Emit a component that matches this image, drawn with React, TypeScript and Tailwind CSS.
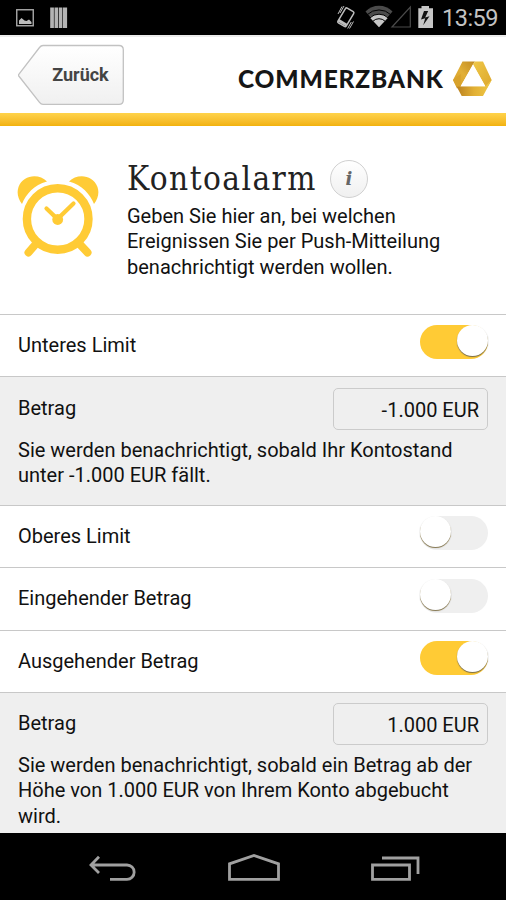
import { useState } from 'react'
import clsx from 'clsx'

type Alarm = {
  label: string
  height: string
  on: boolean
  amount?: string
  info?: string[]
  panelHeight?: string
}

const initialAlarms: Alarm[] = [
  {
    label: 'Unteres Limit',
    height: 'h-[62px]',
    on: true,
    amount: '-1.000 EUR',
    info: ['Sie werden benachrichtigt, sobald Ihr Kontostand', 'unter -1.000 EUR fällt.'],
    panelHeight: 'h-[128px] pt-[11px]',
  },
  { label: 'Oberes Limit', height: 'h-[62px]', on: false },
  { label: 'Eingehender Betrag', height: 'h-[63px]', on: false },
  {
    label: 'Ausgehender Betrag',
    height: 'h-[62px]',
    on: true,
    amount: '1.000 EUR',
    info: [
      'Sie werden benachrichtigt, sobald ein Betrag ab der',
      'Höhe von 1.000 EUR von Ihrem Konto abgebucht',
      'wird.',
    ],
    panelHeight: 'h-[142px] pt-[10px]',
  },
]

function StatusBar() {
  return (
    <div className="flex h-[35px] shrink-0 items-center justify-between bg-black">
      <svg width="80" height="35" viewBox="0 0 80 35">
        <rect x="16.75" y="9.75" width="16.5" height="16" fill="none" stroke="#a8a8a8" strokeWidth="1.4" />
        <path d="M19 24v-3.500l2.500-2.500 3 2.500 2 .5 2.500-1.500 2.500 2.500V24z" fill="#bdbdbd" />
        <path d="M50.200 7.500h3.700V28h-3.700zM54.500 7.500H58V28h-3.500zM58.700 7.500h3.700V28h-3.700zM63 7.500h4.100V28H63z" fill="#b4b4b4" />
      </svg>
      <div className="flex items-center">
        <svg width="110" height="35" viewBox="328 0 110 35">
          <g fill="none" stroke="#bdbdbd">
            <rect x="-4.800" y="-8.600" width="9.600" height="17.200" rx="1.300" strokeWidth="1.500" transform="translate(345.800 17.300) rotate(31)" />
            <path d="M-4.800 6.300h9.600" strokeWidth="3" transform="translate(345.800 17.300) rotate(31)" />
            <path d="M338 14l4-7.500M340 13l4-7M353.500 21.500l-4 7M351.300 22l-3.600 6.500" strokeWidth="1" />
          </g>
          <path d="M365.500 11.500a19 19 0 0 1 27 0L379 27z" fill="#4b4b4b" />
          <path d="M367.200 14.700a17 17 0 0 1 23.600 0" fill="none" stroke="#000" strokeWidth="1" />
          <path d="M370 17.800a13 13 0 0 1 18 0L379 27.300z" fill="#c6c6c6" />
          <path d="M370 17.800a13 13 0 0 1 18 0M373 21.200a8.500 8.500 0 0 1 12 0" fill="none" stroke="#000" strokeWidth="1" />
          <path d="M392 27L410.300 7v20z" fill="none" stroke="#4b4b4b" strokeWidth="1.200" />
          <path d="M418.300 8.300h3.200V6h7.500v2.300h4V28h-14.700z" fill="#c6c6c6" />
          <path d="M424 11l-3 8.500 4.200-1.200-2 7 6.300-9-4.300 1.200 3-6.500z" fill="#111" />
        </svg>
        <span className="w-[68px] pt-[3px] pl-[4px] font-[Roboto] text-[23.500px] leading-none tracking-[-0.500px] text-[#c3c3c3]">13:59</span>
      </div>
    </div>
  )
}

function Logo() {
  return (
    <div className="mt-[9px] flex items-center">
      <span className="w-[215px] font-[Lato] text-[24.500px] leading-none font-black tracking-[0.850px] text-[#161616]">COMMERZBANK</span>
      <svg width="40" height="36" viewBox="0 0 40 36" className="mt-[-2px]">
        <defs>
          <linearGradient id="left" x1="0" y1="1" x2="1" y2="0">
            <stop offset="0" stopColor="#d39b27" />
            <stop offset=".5" stopColor="#e2b037" />
            <stop offset="1" stopColor="#c08a22" />
          </linearGradient>
          <linearGradient id="right" x1="0" y1="0" x2="1" y2="1">
            <stop offset="0" stopColor="#efc848" />
            <stop offset="1" stopColor="#dca62c" />
          </linearGradient>
          <linearGradient id="bottom">
            <stop offset="0" stopColor="#b98020" />
            <stop offset=".5" stopColor="#e2b034" />
            <stop offset="1" stopColor="#f0c947" />
          </linearGradient>
        </defs>
        <path d="M9.500.5H22l-2 3L7.700 25.300 4 27.500 0 19z" fill="url(#left)" />
        <path d="M22 .5h8L38.700 19l-5 8.500-1.400-2.200L20 3.500z" fill="url(#right)" />
        <path d="M3.500 25.300h28.800L38.700 19 30 35H8.700z" fill="url(#bottom)" />
        <path d="M0 19l3.600 6.800 4.100-.5V13z" fill="#d8a22b" />
        <path d="M20 3.500L7.700 25.300h24.600z" fill="#fff" />
      </svg>
    </div>
  )
}

function Header() {
  return (
    <header className="flex h-[78px] shrink-0 items-center justify-between border-t-2 border-[#ececec] bg-white pr-[13px] pl-[18px]">
      <button className="relative h-[62px] w-[107px]">
        <svg width="107" height="62" viewBox="0 0 107 62" className="absolute inset-0">
          <defs>
            <linearGradient id="back" x2="0" y2="1">
              <stop offset="0" stopColor="#fff" />
              <stop offset="1" stopColor="#f0f0f0" />
            </linearGradient>
          </defs>
          <path d="M25 1.500H101q4.300 0 4.300 4.300V56q0 4.300-4.300 4.300H25q-2 0-3.500-2L.8 32q-.6-.8 0-1.600L21.500 3.500q1.500-2 3.500-2z" fill="url(#back)" stroke="#c2c2c2" strokeWidth="1.300" />
        </svg>
        <span className="relative ml-[18px] font-[Roboto] text-[18px] font-bold text-[#444]">Zurück</span>
      </button>
      <Logo />
    </header>
  )
}

function AlarmClock() {
  return (
    <svg width="82" height="82" viewBox="17 176 82 82" className="mt-[50px] shrink-0">
      <g fill="none" stroke="#ffcb35" strokeLinecap="round">
        <circle cx="57.700" cy="219" r="30.800" strokeWidth="8.400" />
        <path d="M35 245l-6.500 7.500M80.500 245l7 7.500" strokeWidth="8" />
        <path d="M46.500 208.500l11 10.500 16-15.500" strokeWidth="4.200" />
      </g>
      <circle cx="57.700" cy="219.500" r="5.400" fill="#ffcb35" />
      <path d="M47 181.500C39 173 23 174.500 18.500 187c-2 6-.5 12 3.500 17 4-10 12-19 25-22.500zM69 181.500c8-8.500 24-7 28.500 5.500 2 6 .5 12-3.500 17-4-10-12-19-25-22.500z" fill="#ffcb35" />
    </svg>
  )
}

function Toggle({ on, onClick }: { on: boolean; onClick: () => void }) {
  return (
    <button
      role="switch"
      aria-checked={on}
      onClick={onClick}
      className={clsx('mb-[7px] flex h-[34px] w-[68px] rounded-full', on ? 'justify-end bg-[#ffcb35]' : 'bg-[#efefef]')}
    >
      <span
        className={clsx(
          'h-[31px] w-[31px] rounded-full bg-white',
          on ? 'shadow-[0_1px_1px_rgba(80,80,80,0.8)]' : 'shadow-[0_1px_1px_rgba(80,80,80,0.75),0_1px_0_rgba(255,203,53,0.6)]',
        )}
      />
    </button>
  )
}

function AmountPanel({ alarm }: { alarm: Alarm }) {
  return (
    <div className={clsx('shrink-0 overflow-hidden bg-[#efefef] pr-[18px] pl-[18px]', alarm.panelHeight)}>
      <div className="flex items-start justify-between">
        <span className="mt-[8px]">Betrag</span>
        <div className="flex h-[42px] w-[155px] items-center justify-end rounded-[5px] border-[1.500px] border-[#cbcbcb] pt-[3px] pr-[8px]">
          {alarm.amount}
        </div>
      </div>
      <p className="mt-[8px] whitespace-nowrap">
        {alarm.info?.map((line) => (
          <span key={line} className="block">{line}</span>
        ))}
      </p>
    </div>
  )
}

function NavBar() {
  return (
    <nav className="flex h-[67px] shrink-0 items-center justify-between bg-black pr-[86px] pl-[88px]">
      <svg width="49" height="30" viewBox="0 0 49 30" fill="none" stroke="#a0a0a0" strokeWidth="2.800">
        <path d="M11 4.800L3 13l8 8M3 13h36a7 7 0 0 1 0 14.300H22" />
      </svg>
      <svg width="53" height="30" viewBox="0 0 53 30" fill="none" stroke="#a0a0a0" strokeWidth="2.800">
        <path d="M1.500 27.300V11.800L26 3.500l24.500 8.300v15.500z" />
      </svg>
      <svg width="49" height="30" viewBox="0 0 49 30" fill="none" stroke="#a0a0a0" strokeWidth="2.800">
        <path d="M1.500 13h37v14.300h-37zM11 6h36v16" />
      </svg>
    </nav>
  )
}

export default function App() {
  const [alarms, setAlarms] = useState(initialAlarms)

  const toggle = (index: number) =>
    setAlarms(alarms.map((alarm, i) => (i === index ? { ...alarm, on: !alarm.on } : alarm)))

  return (
    <div className="flex h-[900px] w-[506px] flex-col overflow-hidden bg-white font-[Roboto] text-[20px] leading-[25.300px] text-[#111]">
      <StatusBar />
      <Header />
      <div className="h-[13px] shrink-0 bg-linear-to-b from-[#ffd34a] to-[#f2b20a]" />

      <section className="flex h-[189px] shrink-0 gap-[28px] border-b border-[#c8c8c8] pl-[17px]">
        <AlarmClock />
        <div className="pt-[34px]">
          <div className="flex items-center gap-[12px]">
            <h1 className="w-[191px] font-['DejaVu_Serif_Condensed','DejaVu_Serif',serif] text-[33px] leading-[38px] tracking-[1.450px] whitespace-nowrap text-[#222]">Kontoalarm</h1>
            <button className="flex h-[38px] w-[38px] items-center justify-center rounded-full border-[1.500px] border-[#d0d0d0] bg-linear-to-b from-white to-[#f0f0f0] font-['DejaVu_Serif',serif] text-[18px] font-bold text-[#666] italic">
              i
            </button>
          </div>
          <p className="mt-[6px] whitespace-nowrap">
            Geben Sie hier an, bei welchen
            <br />
            Ereignissen Sie per Push-Mitteilung
            <br />
            benachrichtigt werden wollen.
          </p>
        </div>
      </section>

      <main className="flex h-[518px] shrink-0 flex-col overflow-hidden">
        {alarms.map((alarm, i) => (
          <div key={alarm.label} className="shrink-0">
            <div className={clsx('flex items-center justify-between border-b border-[#c8c8c8] px-[18px]', alarm.height)}>
              <span>{alarm.label}</span>
              <Toggle on={alarm.on} onClick={() => toggle(i)} />
            </div>
            {alarm.on && alarm.info && (
              <div className={i === 0 ? 'border-b border-[#c8c8c8]' : undefined}>
                <AmountPanel alarm={alarm} />
              </div>
            )}
          </div>
        ))}
      </main>

      <NavBar />
    </div>
  )
}
